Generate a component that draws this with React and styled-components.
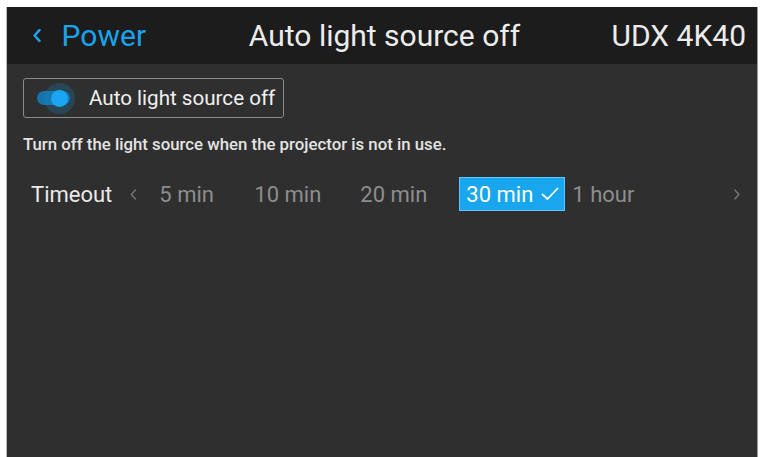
import React, { useState } from "react";
import styled, { createGlobalStyle } from "styled-components";

const GlobalStyle = createGlobalStyle`
  html, body {
    margin: 0;
    padding: 0;
    background: #ffffff;
    overflow: hidden;
  }
  body {
    font-family: Roboto, "Liberation Sans", Arial, sans-serif;
  }
`;

const Screen = styled.div`
  margin: 7px 0 0 7px;
  width: 750px;
  height: 460px;
  background: #2f2f2f;
  display: flex;
  flex-direction: column;
  box-shadow: 1px 0 0 #9a9a9a, -1px 0 0 #bdbdbd;
`;

const Header = styled.header`
  height: 57px;
  background: #1c1c1c;
  display: grid;
  grid-template-columns: 1fr auto 1fr;
  align-items: center;
  padding: 0 11px 0 26px;
  font-size: 30px;
  color: #ececec;
`;

const BackLink = styled.div`
  display: flex;
  align-items: center;
  gap: 20px;
  color: #1aa3ea;
`;

const Title = styled.div`
  justify-self: center;
  padding-right: 10px;
`;

const Model = styled.div`
  justify-self: end;
`;

const Body = styled.main`
  padding: 14px 16px 0 16px;
  display: flex;
  flex-direction: column;
  align-items: flex-start;
`;

const ToggleBox = styled.label`
  display: flex;
  align-items: center;
  gap: 19px;
  height: 38px;
  padding: 0 8px 0 13px;
  border: 1px solid #8a8a8a;
  border-radius: 3px;
  color: #f0f0f0;
  font-size: 20.6px;
  cursor: pointer;
`;

const Track = styled.span`
  position: relative;
  width: 33px;
  height: 14px;
  border-radius: 7px;
  background: ${(p) => (p.$on ? "#1673ad" : "#666")};
`;

const Knob = styled.span`
  position: absolute;
  top: 50%;
  left: ${(p) => (p.$on ? "22px" : "8px")};
  width: 17px;
  height: 17px;
  margin: -8.5px 0 0 -8.5px;
  border-radius: 50%;
  background: #1aa6f2;
  box-shadow: 0 0 0 7px rgba(26, 140, 200, 0.26);
`;

const Hint = styled.p`
  margin: 16px 0 0 0;
  font-size: 16.8px;
  font-weight: 500;
  color: #e4e4e4;
`;

const TimeoutRow = styled.div`
  display: flex;
  align-items: center;
  margin-top: 23px;
  padding-left: 8px;
  width: 724px;
  height: 34px;
`;

const RowLabel = styled.span`
  font-size: 22px;
  color: #eaeaea;
  margin-right: 18px;
`;

const Arrow = styled.span`
  display: flex;
  align-items: center;
  color: #7a7a7a;
  width: 22px;
`;

const Options = styled.div`
  display: flex;
  flex: 1;
  height: 100%;
`;

const Option = styled.button`
  display: flex;
  align-items: center;
  justify-content: space-between;
  width: 106px;
  height: 34px;
  padding: 0 5px 0 6px;
  border: 1px solid ${(p) => (p.$active ? "#5fc6ff" : "transparent")};
  background: ${(p) => (p.$active ? "#18a6ee" : "transparent")};
  color: ${(p) => (p.$active ? "#ffffff" : "#8d8d8d")};
  font-family: inherit;
  font-size: 22px;
  cursor: pointer;

  &:first-child {
    width: 95px;
  }
`;

const Chevron = ({ dir = "left", size = 12, stroke = 2 }) => (
  <svg width={size * 0.66} height={size} viewBox="0 0 8 12" fill="none">
    <polyline
      points={dir === "left" ? "6,1 1.5,6 6,11" : "2,1 6.5,6 2,11"}
      stroke="currentColor"
      strokeWidth={stroke}
      strokeLinecap="round"
      strokeLinejoin="round"
    />
  </svg>
);

const Check = () => (
  <svg width="18" height="14" viewBox="0 0 18 14" fill="none">
    <polyline
      points="1.5,7.5 6.5,12 16.5,1.5"
      stroke="#ffffff"
      strokeWidth="1.8"
      strokeLinecap="round"
      strokeLinejoin="round"
    />
  </svg>
);

const TIMEOUTS = ["5 min", "10 min", "20 min", "30 min", "1 hour"];

export default function App() {
  const [enabled, setEnabled] = useState(true);
  const [timeout, setTimeoutValue] = useState("30 min");

  return (
    <>
      <GlobalStyle />
      <Screen>
        <Header>
          <BackLink>
            <Chevron size={13} stroke={2.4} />
            <span>Power</span>
          </BackLink>
          <Title>Auto light source off</Title>
          <Model>UDX 4K40</Model>
        </Header>
        <Body>
          <ToggleBox onClick={() => setEnabled(!enabled)}>
            <Track $on={enabled}>
              <Knob $on={enabled} />
            </Track>
            Auto light source off
          </ToggleBox>
          <Hint>Turn off the light source when the projector is not in use.</Hint>
          <TimeoutRow>
            <RowLabel>Timeout</RowLabel>
            <Arrow>
              <Chevron size={11} stroke={1.4} />
            </Arrow>
            <Options>
              {TIMEOUTS.map((t) => (
                <Option
                  key={t}
                  $active={t === timeout}
                  onClick={() => setTimeoutValue(t)}
                >
                  {t}
                  {t === timeout && <Check />}
                </Option>
              ))}
            </Options>
            <Arrow>
              <Chevron dir="right" size={11} stroke={1.4} />
            </Arrow>
          </TimeoutRow>
        </Body>
      </Screen>
    </>
  );
}
